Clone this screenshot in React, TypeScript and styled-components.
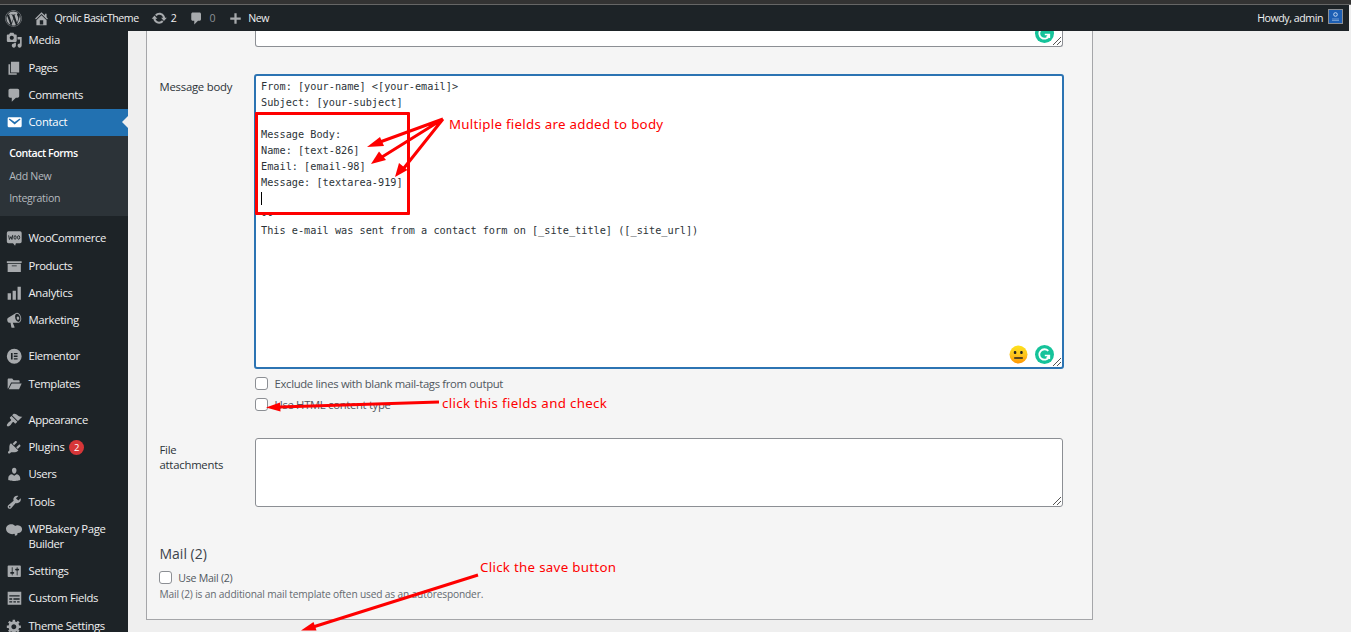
import React from "react";
import styled, { createGlobalStyle } from "styled-components";
import { FaWordpress } from "react-icons/fa";

const GlobalStyle = createGlobalStyle`
  * { box-sizing: border-box; }
  body { margin: 0; background: #efefef; overflow: hidden; }
`;

const ui = `"Segoe UI", "Open Sans", "Noto Sans", sans-serif`;

const Page = styled.div`
  position: relative;
  display: flex;
  flex-direction: column;
  width: 1351px;
  height: 632px;
  overflow: hidden;
  background: #efefef;
  font-family: ${ui};
  font-size: 11.3px;
  color: #2c3338;
`;

const WindowEdge = styled.div`
  flex: none;
  height: 5px;
  background: #333;
  border-bottom: 1px solid #666;
`;

const AdminBar = styled.header`
  flex: none;
  display: flex;
  align-items: center;
  width: 1349px;
  height: 26px;
  padding: 0 6px 0 5px;
  background: #1d2327;
  color: #f0f0f1;
  font-size: 10.6px;
  letter-spacing: -0.43px;
`;

const BarItem = styled.div<{ $gap?: number; $left?: number; $dim?: boolean }>`
  display: flex;
  align-items: center;
  gap: ${(p) => p.$gap ?? 5}px;
  margin-left: ${(p) => p.$left ?? 0}px;
  color: ${(p) => (p.$dim ? "#8c9196" : "#f0f0f1")};
  white-space: nowrap;
  svg { color: #a7aaad; display: block; }
`;

const Spacer = styled.div`
  flex: 1;
`;

const Avatar = styled.span`
  display: flex;
  width: 15px;
  height: 15px;
  margin-bottom: 3px;
  border: 1px solid #8c8f94;
  background: #1d5fb4;
`;

const Body = styled.div`
  display: flex;
  flex: 1;
  min-height: 0;
`;

const Sidebar = styled.nav`
  flex: none;
  width: 128px;
  overflow: hidden;
  background: #1d2327;
`;

const Menu = styled.div`
  display: flex;
  flex-direction: column;
  margin-top: -4px;
`;

const MenuRow = styled.div<{ $active?: boolean; $tall?: boolean }>`
  position: relative;
  flex: none;
  display: flex;
  align-items: flex-start;
  gap: 5.6px;
  height: ${(p) => (p.$tall ? 41.85 : 27.33)}px;
  padding: 5.4px 0 0 6.4px;
  color: ${(p) => (p.$active ? "#fff" : "#f0f0f1")};
  background: ${(p) => (p.$active ? "#2271b1" : "transparent")};
  line-height: 15px;
  svg { flex: none; display: block; color: ${(p) => (p.$active ? "#fff" : "#a7aaad")}; }
`;

const MenuText = styled.span<{ $ls?: number }>`
  letter-spacing: ${(p) => p.$ls ?? -0.38}px;
`;

const Pointer = styled.i`
  position: absolute;
  right: 0;
  top: 7px;
  border: 6.5px solid transparent;
  border-left: 0;
  border-right-color: #efefef;
`;

const Divider = styled.div`
  flex: none;
  height: 8.75px;
`;

const Submenu = styled.div`
  flex: none;
  height: 79.9px;
  padding: 6px 0 0 9.2px;
  background: #2c3338;
  font-size: 10.6px;
`;

const SubItem = styled.div<{ $current?: boolean }>`
  height: 22.5px;
  line-height: 22.5px;
  color: ${(p) => (p.$current ? "#fff" : "#b4b9be")};
  font-weight: ${(p) => (p.$current ? 600 : 400)};
  letter-spacing: ${(p) => (p.$current ? -0.45 : -0.32)}px;
`;

const CountBadge = styled.span`
  display: flex;
  align-items: center;
  justify-content: center;
  width: 15px;
  height: 15px;
  margin: 1px 0 0 -1px;
  border-radius: 50%;
  background: #d63638;
  color: #fff;
  font-size: 9.5px;
`;

const Main = styled.main`
  flex: 1;
  padding-left: 18px;
`;

const Panel = styled.section`
  width: 947px;
  height: 589px;
  padding: 0 28px 0 12.5px;
  border: 1px solid #a5a6a9;
  border-top: 0;
  background: #f5f5f5;
`;

const Field = styled.div<{ $top: number }>`
  display: flex;
  padding-top: ${(p) => p.$top}px;
`;

const Label = styled.label<{ $top?: number }>`
  flex: none;
  width: 95.5px;
  padding: ${(p) => p.$top ?? 5}px 20px 0 0;
  line-height: 15px;
  font-size: 11.3px;
  letter-spacing: -0.22px;
`;

const Control = styled.div`
  display: flex;
  flex-direction: column;
  width: 810px;
`;

const TextBox = styled.div<{ $height: number; $focus?: boolean; $cut?: boolean }>`
  position: relative;
  height: ${(p) => p.$height}px;
  margin-right: 1px;
  margin-left: ${(p) => (p.$focus ? -1 : 0)}px;
  ${(p) => (p.$focus ? "margin-right: 0;" : "")}
  padding: 3px 5px;
  border: ${(p) => (p.$focus ? "2px solid #2c74b3" : "1px solid #8c8f94")};
  ${(p) => (p.$cut ? "border-top: 0; border-radius: 0 0 3px 3px;" : "border-radius: 3px;")}
  background: #fff;
  overflow: hidden;
`;

const Source = styled.pre`
  margin: 0;
  font-family: Consolas, "DejaVu Sans Mono", monospace;
  font-size: 10.23px;
  letter-spacing: 0.006px;
  line-height: 16px;
  color: #2c3338;
`;

const Caret = styled.span`
  display: inline-block;
  width: 1px;
  height: 13px;
  background: #000;
  vertical-align: -3px;
`;

const Corner = styled.div`
  position: absolute;
  right: 0;
  bottom: 0;
  svg { display: block; }
`;

const Helpers = styled.div<{ $right: number }>`
  position: absolute;
  right: ${(p) => p.$right}px;
  bottom: 3px;
  display: flex;
  gap: 7px;
  svg { display: block; }
`;

const CheckRow = styled.div<{ $top: number; $small?: boolean }>`
  display: flex;
  align-items: center;
  gap: 6.5px;
  height: 13px;
  margin-top: ${(p) => p.$top}px;
  margin-left: ${(p) => (p.$small ? -0.8 : 0)}px;
  color: #50575e;
  font-size: ${(p) => (p.$small ? 10.6 : 11.3)}px;
  letter-spacing: ${(p) => (p.$small ? -0.25 : -0.32)}px;
`;

const Checkbox = styled.span`
  width: 13px;
  height: 13px;
  border: 1px solid #8c8f94;
  border-radius: 3px;
  background: #fff;
`;

const Heading = styled.h3`
  margin: 37px 0 0;
  font-size: 14px;
  font-weight: 400;
  line-height: 20px;
  color: #3c434a;
`;

const Hint = styled.p`
  margin: 3px 0 0;
  font-size: 10.2px;
  line-height: 15px;
  letter-spacing: -0.16px;
  color: #646970;
`;

const MarkBox = styled.div`
  position: absolute;
  left: 255px;
  top: 112px;
  width: 155px;
  height: 103px;
  border: 3px solid #fe0000;
  border-radius: 1px;
`;

const Arrows = styled.svg`
  position: absolute;
  left: 0;
  top: 0;
`;

const Note = styled.div<{ $x: number; $y: number; $ls: number }>`
  position: absolute;
  left: ${(p) => p.$x}px;
  top: ${(p) => p.$y}px;
  line-height: 18px;
  font-family: "Noto Sans", sans-serif;
  font-size: 13.3px;
  letter-spacing: ${(p) => p.$ls}px;
  color: #fe0000;
  white-space: nowrap;
`;

const paths = {
  home: "M16 8.5l1.53 1.53-1.06 1.06L10 4.6l-6.47 6.49-1.06-1.06L10 2.5l4 4v-2h2v4zm-6-2.46l6 5.99V18H4v-5.97zM12 17v-5H8v5h4z",
  update: "M10.2 3.28c3.53 0 6.43 2.61 6.92 6h2.08l-3.5 4-3.5-4h2.32c-.45-1.97-2.21-3.45-4.32-3.45-1.45 0-2.73.71-3.54 1.78L4.95 5.66C6.23 4.2 8.11 3.28 10.2 3.28zm-.4 13.44c-3.52 0-6.43-2.61-6.92-6H.8l3.5-4c1.17 1.33 2.33 2.67 3.5 4H5.48c.45 1.97 2.21 3.45 4.32 3.45 1.45 0 2.73-.71 3.54-1.78l1.71 1.95c-1.28 1.46-3.15 2.38-5.25 2.38z",
  comments: "M5 2h9c1.1 0 2 .9 2 2v7c0 1.1-.9 2-2 2h-2l-5 5v-5H5c-1.1 0-2-.9-2-2V4c0-1.1.9-2 2-2z",
  plus: "M17 8.500v3h-5.500v5.500h-3v-5.500H3v-3h5.500V3h3v5.500z",
  media: "M13 11V4c0-.55-.45-1-1-1h-1.67L9 1H5L3.67 3H2c-.55 0-1 .45-1 1v7c0 .55.45 1 1 1h10c.55 0 1-.45 1-1zM7 4.5c1.38 0 2.5 1.12 2.5 2.5S8.38 9.5 7 9.5 4.5 8.38 4.5 7 5.62 4.5 7 4.5zM14 6h5v10.500c0 1.38-1.12 2.5-2.5 2.5S14 17.880 14 16.500s1.120-2.500 2.500-2.500c.170 0 .340.020.500.050V9h-3V6zm-4 8.050V13h2v3.500c0 1.380-1.120 2.500-2.500 2.500S7 17.880 7 16.500 8.120 14 9.500 14c.170 0 .340.020.500.050z",
  page: "M6 15V2h10v13H6zm-1 1h8v2H3V5h2v11z",
  email: "M3.87 4h13.25C18.37 4 19 4.59 19 5.79v8.42c0 1.19-.63 1.79-1.88 1.79H3.87c-1.25 0-1.88-.6-1.88-1.79V5.79c0-1.2.63-1.79 1.88-1.79zm6.62 8.6l6.74-5.53c.24-.2.43-.66.13-1.07-.29-.41-.82-.42-1.17-.17l-5.7 3.86L4.8 5.83c-.35-.25-.88-.24-1.17.17-.3.41-.11.87.13 1.07z",
  archive: "M19 4v2H1V4h18zM2 7h16v10H2V7zm11 3V9H7v1h6z",
  chart: "M18 18V2h-4v16h4zm-6 0V7H8v11h4zm-6 0v-8H2v8h4z",
  megaphone: "M18.15 5.94c.46 1.62.38 3.22-.02 4.48-.42 1.28-1.26 2.18-2.3 2.48-.16.06-.26.06-.4.06-.06.02-.12.02-.18.02-.06.02-.14.02-.22.02h-6.8l2.22 5.5c.02.14-.06.26-.14.34-.08.1-.24.16-.34.16H6.95c-.1 0-.26-.06-.34-.16-.08-.08-.16-.2-.14-.34l-1-5.5H4.25l-.02-.02c-.5.06-1.08-.18-1.54-.62s-.88-1.08-1.06-1.88c-.24-.8-.2-1.56-.02-2.2.18-.62.58-1.08 1.06-1.3l.02-.02 9-5.4c.1-.06.18-.1.24-.16.06-.04.14-.08.24-.12.16-.08.28-.12.5-.18 1.04-.3 2.24.1 3.22.98s1.840 2.240 2.260 3.860zm-2.580 5.980h-.020c.4-.1.740-.34 1.040-.7.580-.7.860-1.760.860-3.040 0-.640-.1-1.3-.280-1.980-.340-1.360-1.020-2.5-1.780-3.240s-1.680-1.1-2.460-.880c-.820.220-1.4.960-1.7 2-.320 1.040-.280 2.360.060 3.720.380 1.360 1 2.5 1.8 3.240.780.740 1.620 1.1 2.480.880zm-1.500-6.400c.9-.1 1.700.7 1.900 1.700s-.2 1.900-1.100 2.100l-1.100.1c-.5-.9-.9-2.400-.7-3.500z",
  elementor: "M10 1a9 9 0 100 18 9 9 0 000-18zM6 6h2v8H6zm3.500 0H14v1.700H9.500zm0 3.150H14v1.700H9.500zm0 3.150H14V14H9.500z",
  folder: "M2 15.500V4.500C2 3.700 2.500 3 3.300 3h4.200l1.700 2h6c.8 0 1.300.5 1.300 1.300V8H6.200L3 14.500zM6.900 9H19l-3.200 7H3.300z",
  appearance: "M14.48 11.06L7.41 3.99l1.5-1.5c.5-.56 2.3-.47 3.51.32 1.21.8 1.43 1.28 2.91 2.1 1.18.64 2.45 1.26 4.45.85zm-.71.71L6.7 4.7 4.93 6.47c-.39.39-.39 1.02 0 1.41l1.06 1.06c.39.39.39 1.03 0 1.42-.6.6-1.43 1.11-2.21 1.69-.35.26-.7.53-1.01.84C1.43 14.23.4 16.08 1.4 17.07c.99 1 2.84-.03 4.18-1.36.31-.31.58-.66.85-1.02.57-.78 1.08-1.61 1.69-2.21.39-.39 1.02-.39 1.41 0l1.06 1.06c.39.39 1.02.39 1.41 0z",
  plugins: "M13.11 4.36L9.87 7.6 8 5.73l3.24-3.24c.35-.34 1.05-.2 1.56.32.52.51.66 1.21.31 1.55zm-8 1.77l.91-1.12 9.01 9.01-1.19.84c-.71.71-2.63 1.16-3.82 1.16H6.14L4.9 17.26c-.59.59-1.54.59-2.12 0-.59-.58-.59-1.53 0-2.12l1.24-1.24v-3.88c0-1.13.4-3.19 1.09-3.89zm7.26 3.97l3.24-3.24c.34-.35 1.04-.21 1.55.31.52.51.66 1.21.31 1.55l-3.24 3.25z",
  users: "M10 9.25c-2.27 0-2.73-3.44-2.73-3.44C7 4.02 7.82 2 9.97 2c2.16 0 2.98 2.02 2.71 3.81 0 0-.41 3.44-2.68 3.44zm0 2.57L12.72 10c2.39 0 4.52 2.33 4.52 4.53v2.49s-3.65 1.13-7.24 1.13c-3.65 0-7.24-1.13-7.24-1.13v-2.49c0-2.25 1.94-4.48 4.47-4.48z",
  tools: "M16.68 9.77c-1.34 1.34-3.3 1.67-4.95.99l-5.41 6.52c-.99.99-2.59.99-3.58 0s-.99-2.59 0-3.57l6.52-5.42c-.68-1.65-.35-3.61.99-4.95 1.28-1.28 3.12-1.62 4.72-1.06l-2.89 2.89 2.82 2.82 2.86-2.87c.53 1.58.18 3.39-1.08 4.65zM3.81 16.21c.4.39 1.04.39 1.43 0 .4-.4.4-1.04 0-1.43-.39-.4-1.03-.4-1.43 0-.39.39-.39 1.03 0 1.43z",
  bakery: "M6.500 4c2 0 3.500.8 4.500 2 1-.8 2.300-1 3.500-.8 3 .3 5 2.300 5 4.800 0 3-2.500 4.800-5.500 4.500.3 2-.8 3.300-3.300 3.500.3-1.300 0-2-.7-2.500-1.500.8-3.500.8-5 0C2.300 15 0 12.500 0 9.500S3 4 6.500 4z",
  settings: "M18 16V4c0-.55-.45-1-1-1H3c-.55 0-1 .45-1 1v12c0 .55.45 1 1 1h14c.55 0 1-.45 1-1zM8 11h1c.55 0 1 .45 1 1s-.45 1-1 1H8v1.5c0 .28-.22.5-.5.5s-.5-.22-.5-.5V13H6c-.55 0-1-.45-1-1s.45-1 1-1h1V5.5c0-.28.22-.5.5-.5s.5.22.5.5V11zm5-2h-1c-.55 0-1-.45-1-1s.45-1 1-1h1V5.5c0-.28.22-.5.5-.5s.5.22.5.5V7h1c.55 0 1 .45 1 1s-.45 1-1 1h-1v5.5c0 .28-.22.5-.5.5s-.5-.22-.5-.5V9z",
  fields: "M2 2h16.500v16H2zM4 6.500v1.500h12.500V6.500zM4 10v1.800h3.500V10zm5 0v1.800h7.500V10zM4 13.500v1.800h3.500v-1.800zm5 0v1.800h3v-1.800zm4.500 0v1.800h3v-1.800z",
  generic: "M18 12h-2.18c-.17.7-.44 1.35-.81 1.93l1.54 1.54-2.1 2.1-1.54-1.54c-.58.36-1.23.63-1.91.79V19H8v-2.18c-.68-.16-1.33-.43-1.91-.79l-1.54 1.54-2.12-2.12 1.54-1.54c-.36-.58-.63-1.23-.79-1.91H1V9.03h2.17c.16-.7.44-1.35.8-1.94L2.43 5.55l2.1-2.1 1.54 1.54c.58-.37 1.24-.64 1.93-.81V2h3v2.18c.68.16 1.33.43 1.91.79l1.54-1.54 2.12 2.12-1.54 1.54c.36.59.64 1.24.8 1.94H18V12zm-8.5 1.5c1.66 0 3-1.34 3-3s-1.34-3-3-3-3 1.34-3 3 1.34 3 3 3z",
};

type IconName = keyof typeof paths;

const Icon = ({ name, size = 16.5 }: { name: IconName; size?: number }) => (
  <svg width={size} height={size} viewBox="0 0 20 20" fill="currentColor" fillRule="evenodd">
    <path d={paths[name]} />
  </svg>
);

const WooIcon = () => (
  <svg width="16.500" height="16.500" viewBox="0 0 20 20">
    <path d="M3 1.500h14a2 2 0 012 2v10.500a2 2 0 01-2 2h-5l-1 3L8.500 16H3a2 2 0 01-2-2V3.500a2 2 0 012-2z" fill="currentColor" />
    <g fill="none" stroke="#1d2327" strokeWidth="1.100">
      <path d="M3.200 6.500l1 5L6 8l1.200 3.500 1-5.500" />
      <ellipse cx="11" cy="9" rx="1.300" ry="2.200" />
      <ellipse cx="15.300" cy="9" rx="1.300" ry="2.200" />
    </g>
  </svg>
);

const Grip = () => (
  <Corner>
    <svg width="10" height="10" viewBox="0 0 10 10" stroke="#555" strokeWidth="1">
      <path d="M1 9l8-8M5 9l4-4" />
    </svg>
  </Corner>
);

const Grammarly = () => (
  <svg width="19" height="19" viewBox="0 0 19 19">
    <circle cx="9.500" cy="9.500" r="9.500" fill="#15c39a" />
    <path d="M13.300 5.900a5.200 5.200 0 10.700 6.200" fill="none" stroke="#fff" strokeWidth="1.800" />
    <path d="M9.800 10.500h4.600v3.600M14.400 10.500l-2.600 2.600" fill="none" stroke="#fff" strokeWidth="1.500" />
  </svg>
);

const NeutralFace = () => (
  <svg width="19" height="19" viewBox="0 0 19 19">
    <defs>
      <linearGradient id="face" x1="0" y1="0" x2="0" y2="1">
        <stop offset="0" stopColor="#fee21b" />
        <stop offset="0.500" stopColor="#fdc61f" />
        <stop offset="1" stopColor="#ff9500" />
      </linearGradient>
    </defs>
    <circle cx="9.500" cy="9.500" r="9" fill="url(#face)" />
    <rect x="4.800" y="6" width="2.500" height="3" rx="1" fill="#222" />
    <rect x="11.200" y="6" width="2.500" height="3" rx="1" fill="#222" />
    <rect x="5" y="12.300" width="9" height="1.400" rx=".7" fill="#222" />
  </svg>
);

const Entry = ({ icon, children, badge, ls }: { icon: IconName; children: React.ReactNode; badge?: number; ls?: number }) => (
  <MenuRow>
    <Icon name={icon} />
    <MenuText $ls={ls}>{children}</MenuText>
    {badge ? <CountBadge>{badge}</CountBadge> : null}
  </MenuRow>
);

const messageHead = `From: [your-name] <[your-email]>
Subject: [your-subject]

Message Body:
Name: [text-826]
Email: [email-98]
Message: [textarea-919]
`;
const messageTail = `
--
This e-mail was sent from a contact form on [_site_title] ([_site_url])`;

export default function App() {
  return (
    <Page>
      <GlobalStyle />
      <WindowEdge />
      <AdminBar>
        <BarItem><FaWordpress size={17} /></BarItem>
        <BarItem $left={11} $gap={4.4}><Icon name="home" size={17} />Qrolic BasicTheme</BarItem>
        <BarItem $left={12} $gap={3.600}><Icon name="update" />2</BarItem>
        <BarItem $left={12.6} $dim $gap={5.4}><Icon name="comments" size={15} />0</BarItem>
        <BarItem $left={13}><Icon name="plus" size={15} />New</BarItem>
        <Spacer />
        <BarItem>
          Howdy, admin
          <Avatar>
            <svg width="13" height="13" viewBox="0 0 13 13" fill="none" stroke="#c5daf3">
              <circle cx="6.500" cy="4.500" r="1.800" />
              <path d="M3 9h7M3 10.500h7" strokeOpacity=".6" strokeWidth=".8" />
            </svg>
          </Avatar>
        </BarItem>
      </AdminBar>
      <Body>
        <Sidebar>
          <Menu>
            <Entry icon="media" ls={-0.2}>Media</Entry>
            <Entry icon="page">Pages</Entry>
            <Entry icon="comments">Comments</Entry>
            <MenuRow $active>
              <Icon name="email" />
              <MenuText $ls={-0.25}>Contact</MenuText>
              <Pointer />
            </MenuRow>
            <Submenu>
              <SubItem $current>Contact Forms</SubItem>
              <SubItem>Add New</SubItem>
              <SubItem>Integration</SubItem>
            </Submenu>
            <Divider />
            <MenuRow><WooIcon /><MenuText>WooCommerce</MenuText></MenuRow>
            <Entry icon="archive">Products</Entry>
            <Entry icon="chart" ls={-0.26}>Analytics</Entry>
            <Entry icon="megaphone" ls={-0.33}>Marketing</Entry>
            <Divider />
            <Entry icon="elementor">Elementor</Entry>
            <Entry icon="folder">Templates</Entry>
            <Divider />
            <Entry icon="appearance">Appearance</Entry>
            <Entry icon="plugins" badge={2} ls={-0.26}>Plugins</Entry>
            <Entry icon="users">Users</Entry>
            <Entry icon="tools">Tools</Entry>
            <MenuRow $tall>
              <Icon name="bakery" />
              <MenuText>WPBakery Page<br />Builder</MenuText>
            </MenuRow>
            <Entry icon="settings" ls={-0.2}>Settings</Entry>
            <Entry icon="fields" ls={-0.32}>Custom Fields</Entry>
            <Entry icon="generic" ls={-0.34}>Theme Settings</Entry>
          </Menu>
        </Sidebar>
        <Main>
          <Panel>
            <Field $top={0}>
              <Label />
              <Control>
                <TextBox $height={16} $cut>
                  <Helpers $right={8}><Grammarly /></Helpers>
                  <Grip />
                </TextBox>
              </Control>
            </Field>
            <Field $top={27}>
              <Label>Message body</Label>
              <Control>
                <TextBox $height={295} $focus>
                  <Source>{messageHead}<Caret />{messageTail}</Source>
                  <Helpers $right={8}><NeutralFace /><Grammarly /></Helpers>
                  <Grip />
                </TextBox>
                <CheckRow $top={8}><Checkbox />Exclude lines with blank mail-tags from output</CheckRow>
                <CheckRow $top={8}><Checkbox />Use HTML content type</CheckRow>
              </Control>
            </Field>
            <Field $top={27}>
              <Label $top={4}>File attachments</Label>
              <Control>
                <TextBox $height={69}><Grip /></TextBox>
              </Control>
            </Field>
            <Heading>Mail (2)</Heading>
            <CheckRow $top={7} $small><Checkbox />Use Mail (2)</CheckRow>
            <Hint>Mail (2) is an additional mail template often used as an autoresponder.</Hint>
          </Panel>
        </Main>
      </Body>
      <MarkBox />
      <Arrows width="1351" height="632" stroke="#fe0000" strokeWidth="3" fill="#fe0000">
        <path d="M443 119L380 142M443 119L382 157M443 119L404 168" />
        <path d="M439 402L280 407M478 575L313 627" />
        <g stroke="none">
          <path d="M367 147L380 137L384 146z" />
          <path d="M371 164L379 151.500L386 160z" />
          <path d="M395 177L399 163L407.500 170z" />
          <path d="M266 407.500L280 402.500L280.500 411.500z" />
          <path d="M301 630.500L313.500 622L316.500 630.500z" />
        </g>
      </Arrows>
      <Note $x={449} $y={115} $ls={0.27}>Multiple fields are added to body</Note>
      <Note $x={442} $y={394} $ls={0.33}>click this fields and check</Note>
      <Note $x={480} $y={558} $ls={0.3}>Click the save button</Note>
    </Page>
  );
}
